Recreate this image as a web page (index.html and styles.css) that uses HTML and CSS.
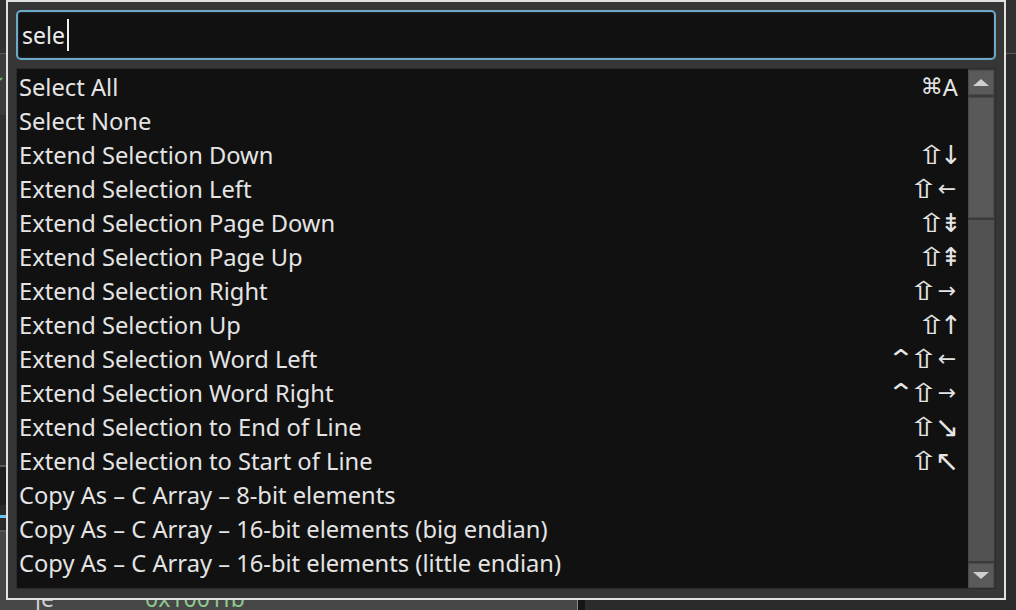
FILE: index.html
```html
<!DOCTYPE html>
<html>
<head>
<meta charset="utf-8">
<link rel="stylesheet" href="styles.css">
</head>
<body>
<div class="app">
  <div class="app-top"></div>
  <div class="app-main">
    <div class="side">
      <div class="side-a"><span class="chev">&#x203A;</span></div>
      <div class="side-b"></div>
      <div class="side-c"></div>
      <div class="side-d"></div>
      <div class="side-e"></div>
      <div class="side-f">
        <div class="reg-row"><span class="reg-name">je</span><span class="reg-val">0x1001fb</span></div>
      </div>
    </div>
    <div class="divider"></div>
    <div class="right"></div>
  </div>
</div>

<div class="palette">
  <div class="search">
    <span class="query">sele</span><span class="caret"></span>
  </div>
  <div class="list">
    <div class="items">
      <div class="row"><span>Select All</span><span class="keys"><i class="cmd">&#x2318;</i><i class="ltr">A</i></span></div>
      <div class="row"><span>Select None</span><span class="keys"></span></div>
      <div class="row"><span>Extend Selection Down</span><span class="keys"><i class="sh">&#x21E7;</i><i class="v">&#x2193;</i></span></div>
      <div class="row"><span>Extend Selection Left</span><span class="keys"><i class="sh">&#x21E7;</i><i class="h">&#x2190;</i></span></div>
      <div class="row"><span>Extend Selection Page Down</span><span class="keys"><i class="sh">&#x21E7;</i><i class="v">&#x21DF;</i></span></div>
      <div class="row"><span>Extend Selection Page Up</span><span class="keys"><i class="sh">&#x21E7;</i><i class="v">&#x21DE;</i></span></div>
      <div class="row"><span>Extend Selection Right</span><span class="keys"><i class="sh">&#x21E7;</i><i class="h">&#x2192;</i></span></div>
      <div class="row"><span>Extend Selection Up</span><span class="keys"><i class="sh">&#x21E7;</i><i class="v">&#x2191;</i></span></div>
      <div class="row"><span>Extend Selection Word Left</span><span class="keys"><i class="ctl">&#x2303;</i><i class="sh">&#x21E7;</i><i class="h">&#x2190;</i></span></div>
      <div class="row"><span>Extend Selection Word Right</span><span class="keys"><i class="ctl">&#x2303;</i><i class="sh">&#x21E7;</i><i class="h">&#x2192;</i></span></div>
      <div class="row"><span>Extend Selection to End of Line</span><span class="keys"><i class="sh">&#x21E7;</i><i class="d">&#x2198;</i></span></div>
      <div class="row"><span>Extend Selection to Start of Line</span><span class="keys"><i class="sh">&#x21E7;</i><i class="d">&#x2196;</i></span></div>
      <div class="row"><span>Copy As – C Array – 8-bit elements</span><span class="keys"></span></div>
      <div class="row"><span>Copy As – C Array – 16-bit elements (big endian)</span><span class="keys"></span></div>
      <div class="row"><span>Copy As – C Array – 16-bit elements (little endian)</span><span class="keys"></span></div>
      <div class="row"><span>Copy As – C Array – 32-bit elements (big endian)</span><span class="keys"></span></div>
    </div>
    <div class="scrollbar">
      <div class="sb-btn"><span class="tri-up"></span></div>
      <div class="sb-thumb"></div>
      <div class="sb-track"></div>
      <div class="sb-btn"><span class="tri-down"></span></div>
    </div>
  </div>
</div>
</body>
</html>
```

FILE: styles.css
```css
html, body {
  margin: 0;
  padding: 0;
}
body {
  width: 1016px;
  height: 610px;
  overflow: hidden;
  background: #2b2b2b;
  font-family: "Noto Sans", "Open Sans", "DejaVu Sans", sans-serif;
  position: relative;
}

/* background application */
.app {
  display: flex;
  flex-direction: column;
  height: 610px;
}
.app-top {
  height: 53px;
  background: #313131;
  border-bottom: 1px solid #5a5a5a;
  flex: none;
}
.app-main {
  flex: 1;
  display: flex;
}
.side {
  width: 577px;
  display: flex;
  flex-direction: column;
  border-right: 1px solid #8a8a8a;
}
.side-a {
  height: 61px;
  background: #3b3b3b;
  position: relative;
}
.chev {
  color: #7fbf7f;
  font-size: 20px;
  position: absolute;
  left: -3px;
  top: 12px;
  transform: rotate(90deg);
}
.side-b {
  height: 350px;
  background: #303030;
  border-bottom: 2px solid #5a5a5a;
}
.side-c {
  height: 38px;
  background: #1f1f1f;
}
.side-d {
  height: 10px;
  background: #2a2a2a;
  border-bottom: 3px solid #6ec6f0;
}
.side-e {
  height: 12px;
  background: #2a2a2a;
  border-bottom: 2px solid #555;
}
.side-f {
  flex: 1;
  background: #474747;
  display: flex;
  flex-direction: column;
  justify-content: flex-end;
}
.reg-row {
  display: flex;
  font-size: 23px;
  line-height: 30px;
  margin-bottom: -3px;
}
.reg-name {
  color: #cfcfcf;
  width: 110px;
  padding-left: 35px;
}
.reg-val {
  color: #8ec98e;
}
.divider {
  width: 7px;
  background: #151515;
}
.right {
  flex: 1;
  background: #2b2b2b;
}

/* command palette overlay */
.palette {
  position: absolute;
  left: 6px;
  top: 0;
  width: 1000px;
  height: 600px;
  box-sizing: border-box;
  border: 2px solid #e2e2e2;
  background: #363636;
  padding: 8px 8px 9px 8px;
  display: flex;
  flex-direction: column;
  gap: 8px;
}
.search {
  height: 50px;
  flex: none;
  box-sizing: border-box;
  border: 2px solid #6aa9c9;
  border-radius: 5px;
  background: #111111;
  box-shadow: inset 0 0 0 1px #222;
  display: flex;
  align-items: center;
  padding-left: 4px;
}
.query {
  color: #ececec;
  font-size: 23px;
  line-height: 30px;
}
.caret {
  width: 2px;
  height: 32px;
  background: #f0f0f0;
  margin-left: 2px;
}
.list {
  flex: 1;
  min-height: 0;
  display: flex;
  border: 1px solid #2c2c2c;
  background: #3a3a3a;
}
.items {
  flex: 1;
  background: #111111;
  overflow: hidden;
  padding-top: 1px;
}
.row {
  height: 34px;
  display: flex;
  align-items: center;
  justify-content: space-between;
  padding: 0 12px 0 2px;
  box-sizing: border-box;
  color: #e4e4e4;
  font-size: 23.7px;
  white-space: nowrap;
}
.keys {
  font-family: "DejaVu Sans", sans-serif;
  font-size: 22px;
  height: 34px;
  display: flex;
  align-items: center;
  gap: 5px;
}
.keys i {
  font-style: normal;
  height: 34px;
  line-height: 34px;
  display: flex;
  align-items: center;
  justify-content: center;
}
.keys .sh {
  width: 19px;
  font-size: 26px;
  transform: scaleX(1.4);
}
.keys .ctl {
  width: 14px;
  font-size: 26px;
  transform: scaleX(1.3);
  margin-right: 1px;
}
.keys .cmd {
  font-size: 22px;
}
.keys .ltr {
  font-family: "Noto Sans", sans-serif;
  font-size: 23.7px;
  margin-left: -5px;
  margin-right: -2px;
}
.keys .v {
  width: 10px;
  font-size: 26px;
}
.keys .h {
  width: 18px;
  font-size: 22px;
}
.keys .d {
  width: 18px;
  font-size: 29px;
}
.scrollbar {
  width: 27px;
  flex: none;
  display: flex;
  flex-direction: column;
  gap: 2px;
  background: #3a3a3a;
  padding: 1px 1px 0 0;
  box-sizing: border-box;
}
.sb-btn {
  height: 25px;
  flex: none;
  box-sizing: border-box;
  background: #5a5a5a;
  border: 1px solid #4a4a4a;
  display: flex;
  align-items: center;
  justify-content: center;
}
.tri-up {
  width: 0;
  height: 0;
  border-left: 8px solid transparent;
  border-right: 8px solid transparent;
  border-bottom: 7px solid #cfcfcf;
}
.tri-down {
  width: 0;
  height: 0;
  border-left: 8px solid transparent;
  border-right: 8px solid transparent;
  border-top: 7px solid #cfcfcf;
}
.sb-thumb {
  height: 121px;
  flex: none;
  box-sizing: border-box;
  background: #595959;
  border: 1px solid #4a4a4a;
}
.sb-track {
  flex: 1;
  background: #525252;
  border-left: 1px solid #484848;
}
```
